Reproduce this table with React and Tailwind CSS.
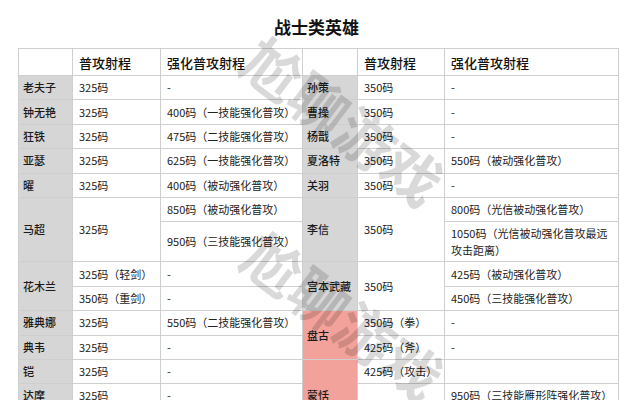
import React from 'react'

const GRAY = 'bg-[#d6d6d6]'
const RED = 'bg-[#f2a29a]'

function Cell({ children, rs, bg = '', cls = '' }) {
    return (
        <td rowSpan={rs} className={`border border-[#cfcfcf] px-[6px] align-middle ${bg} ${cls}`}>
            {children}
        </td>
    )
}

function Name({ children, rs, red }) {
    return <Cell rs={rs} bg={red ? RED : GRAY} cls="whitespace-nowrap !px-[4px] font-medium text-[#1a1a1a]">{children}</Cell>
}

export default function App() {
    return (
        <div className="relative h-[400px] overflow-hidden bg-white text-[#222]"
            style={{ fontFamily: '"Noto Sans CJK SC", "Noto Sans", sans-serif' }}>
            <h1 className="pt-[15px] text-center text-[17px] font-bold leading-[24px] text-[#111]">战士类英雄</h1>

            <table className="mt-[9px] ml-[18px] w-[600px] table-fixed border-collapse text-[11px] leading-[15px]">
                <colgroup>
                    <col className="w-[54px]" />
                    <col className="w-[88px]" />
                    <col className="w-[142px]" />
                    <col className="w-[55px]" />
                    <col className="w-[87px]" />
                    <col className="w-[174px]" />
                </colgroup>
                <thead>
                    <tr className="h-[27px] text-left text-[13px] font-medium text-[#111]">
                        <Cell />
                        <Cell>普攻射程</Cell>
                        <Cell>强化普攻射程</Cell>
                        <Cell />
                        <Cell>普攻射程</Cell>
                        <Cell>强化普攻射程</Cell>
                    </tr>
                </thead>
                <tbody>
                    <tr className="h-[24.4px]">
                        <Name>老夫子</Name><Cell>325码</Cell><Cell>-</Cell>
                        <Name>孙策</Name><Cell>350码</Cell><Cell>-</Cell>
                    </tr>
                    <tr className="h-[24.4px]">
                        <Name>钟无艳</Name><Cell>325码</Cell><Cell>400码（一技能强化普攻）</Cell>
                        <Name>曹操</Name><Cell>350码</Cell><Cell>-</Cell>
                    </tr>
                    <tr className="h-[24.4px]">
                        <Name>狂铁</Name><Cell>325码</Cell><Cell>475码（二技能强化普攻）</Cell>
                        <Name>杨戬</Name><Cell>350码</Cell><Cell>-</Cell>
                    </tr>
                    <tr className="h-[24.4px]">
                        <Name>亚瑟</Name><Cell>325码</Cell><Cell>625码（一技能强化普攻）</Cell>
                        <Name>夏洛特</Name><Cell>350码</Cell><Cell>550码（被动强化普攻）</Cell>
                    </tr>
                    <tr className="h-[24.4px]">
                        <Name>曜</Name><Cell>325码</Cell><Cell>400码（被动强化普攻）</Cell>
                        <Name>关羽</Name><Cell>350码</Cell><Cell>-</Cell>
                    </tr>
                    <tr className="h-[24.4px]">
                        <Name rs={2}>马超</Name><Cell rs={2}>325码</Cell><Cell>850码（被动强化普攻）</Cell>
                        <Name rs={2}>李信</Name><Cell rs={2}>350码</Cell><Cell>800码（光信被动强化普攻）</Cell>
                    </tr>
                    <tr className="h-[40px]">
                        <Cell>950码（三技能强化普攻）</Cell>
                        <Cell cls="leading-[17px]">1050码（光信被动强化普攻最远攻击距离）</Cell>
                    </tr>
                    <tr className="h-[24.4px]">
                        <Name rs={2}>花木兰</Name><Cell>325码（轻剑）</Cell><Cell>-</Cell>
                        <Name rs={2}>宫本武藏</Name><Cell rs={2}>350码</Cell><Cell>425码（被动强化普攻）</Cell>
                    </tr>
                    <tr className="h-[24.4px]">
                        <Cell>350码（重剑）</Cell><Cell>-</Cell>
                        <Cell>450码（三技能强化普攻）</Cell>
                    </tr>
                    <tr className="h-[24.4px]">
                        <Name>雅典娜</Name><Cell>325码</Cell><Cell>550码（二技能强化普攻）</Cell>
                        <Name rs={2} red>盘古</Name><Cell>350码（拳）</Cell><Cell>-</Cell>
                    </tr>
                    <tr className="h-[24.4px]">
                        <Name>典韦</Name><Cell>325码</Cell><Cell>-</Cell>
                        <Cell>425码（斧）</Cell><Cell>-</Cell>
                    </tr>
                    <tr className="h-[24.4px]">
                        <Name>铠</Name><Cell>325码</Cell><Cell>-</Cell>
                        <Name rs={3} red>蒙恬</Name><Cell>425码（攻击）</Cell><Cell />
                    </tr>
                    <tr className="h-[24.4px]">
                        <Name>达摩</Name><Cell>325码</Cell><Cell>-</Cell>
                        <Cell /><Cell>950码（三技能雁形阵强化普攻）</Cell>
                    </tr>
                    <tr className="h-[24.4px]">
                        <Name>吕布</Name><Cell>325码</Cell><Cell>-</Cell>
                        <Cell /><Cell>-</Cell>
                    </tr>
                </tbody>
            </table>

            {/* watermark */}
            <div className="pointer-events-none absolute left-[344px] top-[120px] -translate-x-1/2 -translate-y-1/2 rotate-[37deg] whitespace-nowrap text-[58px] font-bold leading-none text-black/15">
                尬聊游戏
            </div>
            <div className="pointer-events-none absolute left-[344px] top-[315px] -translate-x-1/2 -translate-y-1/2 rotate-[37deg] whitespace-nowrap text-[58px] font-bold leading-none text-black/15">
                尬聊游戏
            </div>
        </div>
    )
}
